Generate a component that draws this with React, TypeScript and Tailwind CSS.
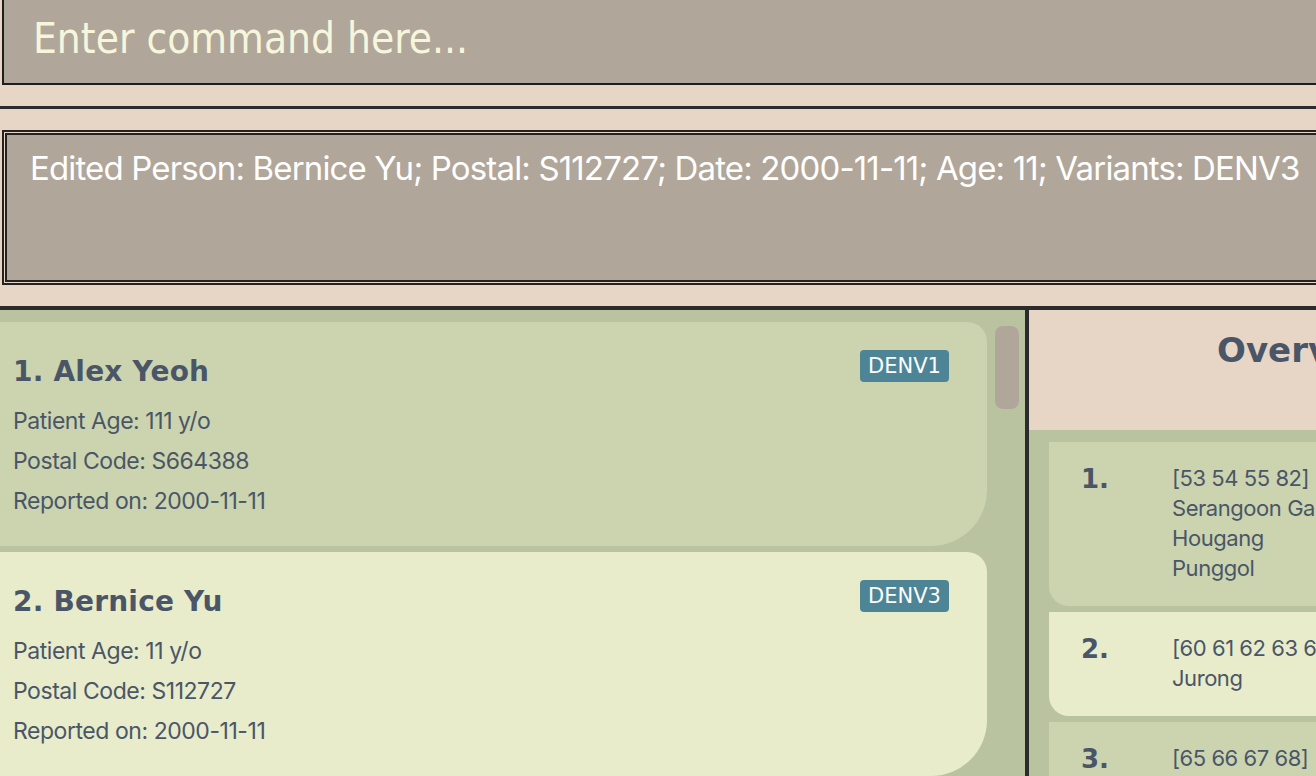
import React from "react";

function PersonCard({ idx, name, age, postal, date, variant, bg }: { idx: number; name: string; age: string; postal: string; date: string; variant: string; bg: string }) {
  return (
    <div className={`relative w-[1007px] -ml-[20px] h-[224px] shrink-0 rounded-tr-[20px] rounded-br-[56px] ${bg} pl-[33px] pt-[28px]`}>
      <div className="flex items-start">
        <div className="text-[28px] font-bold text-[#4a5668] leading-[44px] tracking-[0.2px]" style={{ fontFamily: '"DejaVu Sans", Verdana, sans-serif' }}>
          {idx}. {name}
        </div>
      </div>
      <div className="absolute left-[880px] top-[28px] h-[32px] w-[89px] rounded-[4px] bg-[#4d8596] text-white text-[21px] flex items-center justify-center pt-[2px]" style={{ fontFamily: '"DejaVu Sans", Verdana, sans-serif' }}>
        {variant}
      </div>
      <div className="mt-[7px] flex flex-col text-[23px] text-[#4a5668] tracking-[-0.45px]" style={{ fontFamily: 'Inter, "Noto Sans", sans-serif' }}>
        <div className="h-[40px] leading-[40px]">Patient Age: {age} y/o</div>
        <div className="h-[40px] leading-[40px]">Postal Code: {postal}</div>
        <div className="h-[40px] leading-[40px]">Reported on: {date}</div>
      </div>
    </div>
  );
}

function ClusterCard({ idx, lines, bg, h }: { idx: number; lines: string[]; bg: string; h: string }) {
  return (
    <div className={`flex ${h} w-[400px] shrink-0 rounded-bl-[20px] ${bg} pt-[21px]`}>
      <div className="w-[123px] pl-[32px] text-[26px] font-bold text-[#4a5668] leading-[32px]" style={{ fontFamily: '"DejaVu Sans", Verdana, sans-serif' }}>
        {idx}.
      </div>
      <div className="flex flex-col text-[22px] text-[#4a5668] tracking-[-0.45px] whitespace-nowrap" style={{ fontFamily: 'Inter, "Noto Sans", sans-serif' }}>
        {lines.map((l, i) => (
          <div key={i} className="h-[30px] leading-[30px]">{l}</div>
        ))}
      </div>
    </div>
  );
}

export default function App() {
  return (
    <div className="w-[1316px] h-[776px] overflow-hidden bg-[#e7d5c5]">
      <div className="w-[1500px] flex flex-col">
        {/* command box */}
        <div className="ml-[2px] h-[85px] border-l-2 border-b-2 border-[#1e1e1e] bg-[#b1a69a] pl-[29px] flex items-center">
          <span className="text-[42px] text-[#f6f6dc] leading-none -mt-[6px] font-stretch-condensed" style={{ fontFamily: '"DejaVu Sans", Tahoma, Verdana, sans-serif', fontStretch: "condensed" }}>
            Enter command here...
          </span>
        </div>
        <div className="h-[21px]" />
        <div className="h-[3px] bg-[#2b2b2b]" />
        <div className="h-[21px]" />
        {/* result box */}
        <div className="ml-[2px] h-[155px] border-2 border-r-0 border-[#222] p-[1px] pr-0">
          <div className="h-full border-2 border-r-0 border-[#222] bg-[#b1a69a] pl-[23px] pt-[9px]">
            <div className="text-[33px] text-white tracking-[-0.85px] whitespace-nowrap" style={{ fontFamily: 'Inter, "Noto Sans", sans-serif' }}>
              Edited Person: Bernice Yu; Postal: S112727; Date: 2000-11-11; Age: 11; Variants: DENV3
            </div>
          </div>
        </div>
        <div className="h-[21px]" />
        <div className="h-[4px] bg-[#2b2b2b]" />
        {/* bottom */}
        <div className="flex h-[470px]">
          <div className="w-[1025px] bg-[#bac39f] flex pt-[12px] overflow-hidden">
            <div className="flex flex-col gap-[6px] w-[987px]">
              <PersonCard idx={1} name="Alex Yeoh" age="111" postal="S664388" date="2000-11-11" variant="DENV1" bg="bg-[#cbd4ae]" />
              <PersonCard idx={2} name="Bernice Yu" age="11" postal="S112727" date="2000-11-11" variant="DENV3" bg="bg-[#e8ecca]" />
            </div>
            <div className="ml-[8px] mt-[4px] w-[24px] h-[83px] rounded-[8px] bg-[#b1a69a]" />
          </div>
          <div className="w-[4px] bg-[#2b2b2b]" />
          <div className="flex-1 flex flex-col">
            <div className="h-[120px] shrink-0 bg-[#e7d5c5] pl-[188px] pt-[18px]">
              <div className="text-[34px] font-bold text-[#4a5668] leading-[44px]" style={{ fontFamily: '"DejaVu Sans", Verdana, sans-serif' }}>
                Overview
              </div>
            </div>
            <div className="flex-1 bg-[#bac39f] pl-[20px] pt-[12px] flex flex-col gap-[6px] overflow-hidden">
              <ClusterCard idx={1} lines={["[53 54 55 82]", "Serangoon Gardens", "Hougang", "Punggol"]} bg="bg-[#cbd4ae]" h="h-[164px]" />
              <ClusterCard idx={2} lines={["[60 61 62 63 64]", "Jurong"]} bg="bg-[#e8ecca]" h="h-[104px]" />
              <ClusterCard idx={3} lines={["[65 66 67 68]", "Tampines"]} bg="bg-[#cbd4ae]" h="h-[104px]" />
            </div>
          </div>
        </div>
      </div>
    </div>
  );
}
